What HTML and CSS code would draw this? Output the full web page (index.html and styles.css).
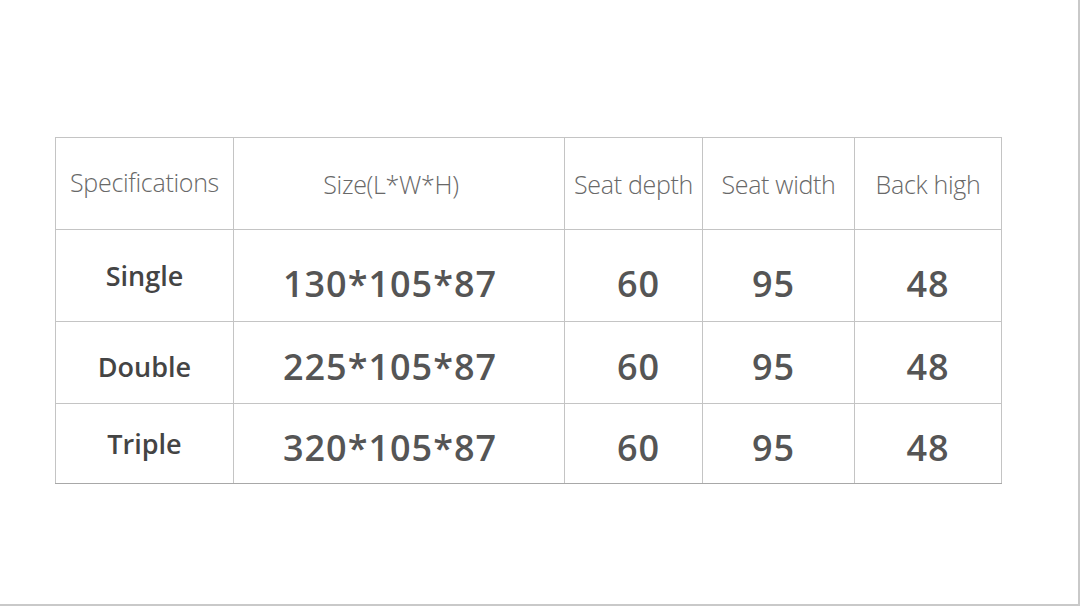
FILE: index.html
```html
<!DOCTYPE html>
<html>
<head>
<meta charset="utf-8">
<link rel="stylesheet" href="styles.css">
</head>
<body>
<div class="page">
  <table class="spec">
    <colgroup>
      <col class="c1"><col class="c2"><col class="c3"><col class="c4"><col class="c5">
    </colgroup>
    <thead>
      <tr class="head">
        <th>Specifications</th>
        <th class="size">Size(L*W*H)</th>
        <th>Seat depth</th>
        <th>Seat width</th>
        <th>Back high</th>
      </tr>
    </thead>
    <tbody>
      <tr class="r1">
        <td class="label">Single</td>
        <td class="num size">130*105*87</td>
        <td class="num depth">60</td>
        <td class="num width">95</td>
        <td class="num">48</td>
      </tr>
      <tr class="r2">
        <td class="label">Double</td>
        <td class="num size">225*105*87</td>
        <td class="num depth">60</td>
        <td class="num width">95</td>
        <td class="num">48</td>
      </tr>
      <tr class="r3">
        <td class="label">Triple</td>
        <td class="num size">320*105*87</td>
        <td class="num depth">60</td>
        <td class="num width">95</td>
        <td class="num">48</td>
      </tr>
    </tbody>
  </table>
</div>
</body>
</html>
```

FILE: styles.css
```css
html, body {
  margin: 0;
  padding: 0;
  background: #ffffff;
}

.page {
  box-sizing: border-box;
  width: 1080px;
  height: 606px;
  padding: 137px 0 0 55px;
  border-right: 2px solid #c9c9c9;
  border-bottom: 2px solid #c9c9c9;
  background: #ffffff;
  font-family: "Open Sans", "Noto Sans", sans-serif;
}

.spec {
  border-collapse: collapse;
  table-layout: fixed;
  width: 946px;
}

.c1 { width: 178px; }
.c2 { width: 331px; }
.c3 { width: 138px; }
.c4 { width: 152px; }
.c5 { width: 147px; }

.spec th,
.spec td {
  box-sizing: border-box;
  border: 1px solid #c4c4c4;
  padding: 0;
  text-align: center;
  vertical-align: middle;
  white-space: nowrap;
}

.spec tbody tr:last-child td {
  border-bottom-color: #a8a8a8;
}

.head th {
  height: 92px;
  font-weight: 300;
  font-size: 25px;
  color: #686868;
  letter-spacing: -0.3px;
}

.head th:first-child {
  padding-bottom: 4px;
}

.head th:not(:first-child) {
  padding-top: 1px;
}

.head th.size {
  padding-right: 16px;
}

.r1 td { height: 92px; }
.r2 td { height: 82px; }
.r3 td { height: 80px; }

.label {
  font-weight: 600;
  font-size: 27px;
  color: #444444;
}

.num {
  font-weight: 600;
  font-size: 36px;
  color: #555555;
  letter-spacing: 1px;
}

.num.size { padding-right: 18px; }
.num.depth { padding-left: 10px; }
.num.width { padding-right: 10px; }

.r1 .num { padding-top: 16px; }
.r2 .num { padding-top: 8px; }
.r2 .label { padding-top: 8px; }
.r3 .num { padding-top: 8px; }
```
